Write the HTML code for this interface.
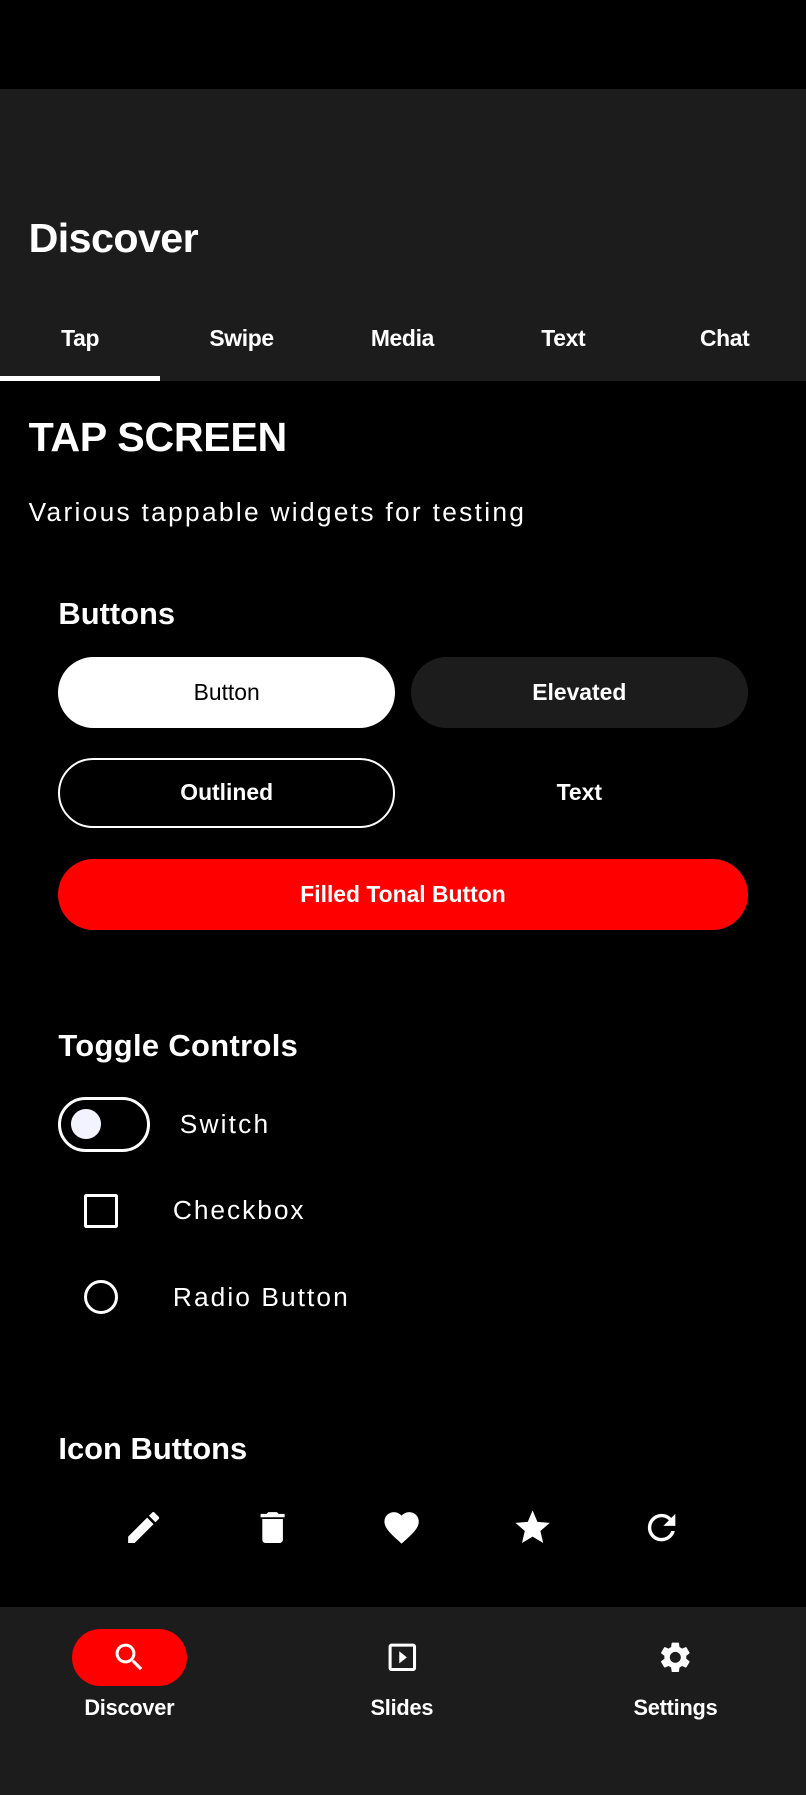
<!DOCTYPE html>
<html><head><meta charset="utf-8"><style>
*{margin:0;padding:0;box-sizing:border-box}
html,body{width:806px;height:1795px;background:#000;overflow:hidden}
#r{position:relative;width:704px;height:1568px;zoom:1.144886;font-family:"Liberation Sans",sans-serif;color:#fff}
.a{position:absolute}
.c{display:flex;align-items:center;justify-content:center}
.b{font-weight:bold}
</style></head><body><div id="r">
<div class="a" style="left:0;top:78px;width:704px;height:255px;background:#1c1c1c"></div>
<div class="a b" style="left:25px;top:186px;font-size:36px;line-height:44px;letter-spacing:-0.5px">Discover</div>
<div class="a c b" style="left:0;top:278px;width:140px;height:36px;font-size:20px;letter-spacing:-0.3px">Tap</div>
<div class="a c b" style="left:141px;top:278px;width:140px;height:36px;font-size:20px;letter-spacing:-0.3px">Swipe</div>
<div class="a c b" style="left:281px;top:278px;width:141px;height:36px;font-size:20px;letter-spacing:-0.3px">Media</div>
<div class="a c b" style="left:422px;top:278px;width:140px;height:36px;font-size:20px;letter-spacing:-0.3px">Text</div>
<div class="a c b" style="left:562px;top:278px;width:142px;height:36px;font-size:20px;letter-spacing:-0.3px">Chat</div>
<div class="a" style="left:0;top:328px;width:140px;height:5px;background:#fff"></div>
<div class="a b" style="left:25px;top:360px;font-size:36px;line-height:44px;letter-spacing:-0.3px">TAP SCREEN</div>
<div class="a" style="left:25px;top:433px;font-size:23px;line-height:28px;letter-spacing:2px">Various tappable widgets for testing</div>
<div class="a b" style="left:51px;top:521px;font-size:27px;line-height:32px">Buttons</div>
<div class="a c" style="left:51px;top:574px;width:294px;height:62px;border-radius:31px;background:#fff;color:#000;font-size:20px">Button</div>
<div class="a c b" style="left:359px;top:574px;width:294px;height:62px;border-radius:31px;background:#1c1c1c;font-size:20px">Elevated</div>
<div class="a c b" style="left:51px;top:662px;width:294px;height:61px;border-radius:31px;border:2px solid #fff;font-size:20px">Outlined</div>
<div class="a c b" style="left:359px;top:662px;width:294px;height:61px;font-size:20px">Text</div>
<div class="a c b" style="left:51px;top:750px;width:602px;height:62px;border-radius:31px;background:#f00;font-size:20px">Filled Tonal Button</div>
<div class="a b" style="left:51px;top:898px;font-size:27px;line-height:32px;letter-spacing:0.3px">Toggle Controls</div>
<div class="a" style="left:51px;top:958px;width:80px;height:48px;border-radius:24px;border:3px solid #fff"></div>
<div class="a" style="left:62px;top:969px;width:26px;height:26px;border-radius:50%;background:#f3f3ff"></div>
<div class="a" style="left:157px;top:968px;font-size:23px;line-height:28px;letter-spacing:1.9px">Switch</div>
<div class="a" style="left:73px;top:1043px;width:30px;height:30px;border:3px solid #fff;border-radius:2px"></div>
<div class="a" style="left:151px;top:1043px;font-size:23px;line-height:28px;letter-spacing:1.7px">Checkbox</div>
<div class="a" style="left:73px;top:1118px;width:30px;height:30px;border:3px solid #fff;border-radius:50%"></div>
<div class="a" style="left:151px;top:1119px;font-size:23px;line-height:28px;letter-spacing:1.8px">Radio Button</div>
<div class="a b" style="left:51px;top:1250px;font-size:27px;line-height:32px">Icon Buttons</div>
<svg class="a" style="left:107px;top:1316px" width="36" height="36" viewBox="0 0 24 24" fill="#fff"><path d="M3 17.25V21h3.75L17.81 9.94l-3.75-3.75L3 17.25zM20.71 7.04a1 1 0 0 0 0-1.41l-2.34-2.34a1 1 0 0 0-1.41 0l-1.83 1.83 3.75 3.75 1.830-1.83z"/></svg>
<svg class="a" style="left:220px;top:1316px" width="36" height="36" viewBox="0 0 24 24" fill="#fff"><path d="M6 19c0 1.1.9 2 2 2h8c1.1 0 2-.9 2-2V7H6v12zM19 4h-3.5l-1-1h-5l-1 1H5v2h14V4z"/></svg>
<svg class="a" style="left:333px;top:1316px" width="36" height="36" viewBox="0 0 24 24" fill="#fff"><path d="M12 21.35l-1.45-1.32C5.4 15.36 2 12.28 2 8.5 2 5.42 4.42 3 7.5 3c1.74 0 3.41.81 4.5 2.09C13.09 3.81 14.76 3 16.5 3 19.58 3 22 5.420 22 8.5c0 3.78-3.4 6.86-8.55 11.54L12 21.35z"/></svg>
<svg class="a" style="left:447px;top:1316px" width="36" height="36" viewBox="0 0 24 24" fill="#fff"><path d="M12 17.27L18.18 21l-1.64-7.03L22 9.24l-7.19-.61L12 2 9.19 8.63 2 9.24l5.46 4.73L5.82 21z"/></svg>
<svg class="a" style="left:560px;top:1316px" width="36" height="36" viewBox="0 0 24 24" fill="#fff"><path d="M17.65 6.35A7.958 7.958 0 0 0 12 4c-4.42 0-7.99 3.58-7.99 8s3.57 8 7.990 8c3.73 0 6.84-2.55 7.73-6h-2.08A5.99 5.99 0 0 1 12 18c-3.31 0-6-2.69-6-6s2.69-6 6-6c1.66 0 3.14.69 4.22 1.78L13 11h7V4l-2.35 2.35z"/></svg>
<div class="a" style="left:0;top:1404px;width:704px;height:164px;background:#1c1c1c"></div>
<div class="a" style="left:63px;top:1423px;width:100px;height:50px;border-radius:25px;background:#f00"></div>
<svg class="a" style="left:97px;top:1432px" width="32" height="32" viewBox="0 0 24 24" fill="#fff"><path d="M15.5 14h-.79l-.28-.27A6.47 6.47 0 0 0 16 9.5 6.5 6.5 0 1 0 9.5 16c1.61 0 3.09-.59 4.23-1.57l.27.28v.79l5 4.99L20.49 19l-4.99-5zm-6 0C7.01 14 5 11.99 5 9.5S7.01 5 9.5 5 14 7.01 14 9.5 11.99 14 9.5 14z"/></svg>
<svg class="a" style="left:335px;top:1432px" width="32" height="32" viewBox="0 0 24 24" fill="#fff"><path d="M19 3H5c-1.1 0-2 .9-2 2v14c0 1.1.9 2 2 2h14c1.1 0 2-.9 2-2V5c0-1.1-.9-2-2-2zm0 16H5V5h14v14zM10 8v8l5-4z"/></svg>
<svg class="a" style="left:574px;top:1432px" width="32" height="32" viewBox="0 0 24 24" fill="#fff"><path d="M19.14 12.94c.04-.3.06-.61.06-.94 0-.32-.02-.64-.07-.94l2.030-1.58a.49.49 0 0 0 .12-.61l-1.92-3.32a.488.488 0 0 0-.59-.22l-2.39.96c-.5-.38-1.03-.7-1.62-.94l-.36-2.54a.484.484 0 0 0-.48-.41h-3.84c-.24 0-.43.17-.47.41l-.36 2.54c-.59.24-1.13.57-1.62.94l-2.39-.96c-.22-.08-.47 0-.59.22L2.74 8.87c-.12.21-.08.47.12.61l2.03 1.58c-.05.3-.09.63-.09.94s.02.64.07.94l-2.03 1.58a.49.49 0 0 0-.12.61l1.92 3.32c.12.22.37.29.59.22l2.39-.96c.5.38 1.03.7 1.62.94l.36 2.54c.05.24.24.41.48.41h3.84c.24 0 .44-.17.47-.41l.36-2.54c.59-.24 1.13-.56 1.62-.94l2.39.96c.22.08.47 0 .59-.22l1.92-3.32c.12-.22.07-.47-.12-.61l-2.01-1.58zM12 15.6c-1.98 0-3.6-1.62-3.6-3.6s1.62-3.6 3.6-3.6 3.6 1.62 3.6 3.6-1.62 3.6-3.6 3.6z"/></svg>
<div class="a c b" style="left:33px;top:1480px;width:160px;height:24px;font-size:19px;letter-spacing:-0.2px">Discover</div>
<div class="a c b" style="left:271px;top:1480px;width:160px;height:24px;font-size:19px;letter-spacing:-0.2px">Slides</div>
<div class="a c b" style="left:510px;top:1480px;width:160px;height:24px;font-size:19px;letter-spacing:-0.2px">Settings</div>
</div></body></html>
